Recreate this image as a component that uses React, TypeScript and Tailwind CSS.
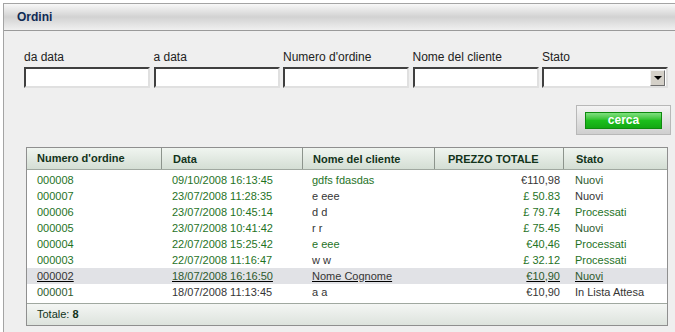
import React from 'react';

const G = 'text-[#1f731f]';
const D = 'text-[#353535]';
const M = 'text-[#2d5a2d]';

type Row = {
  num: string;
  data: string;
  nome: string;
  prezzo: string;
  stato: string;
  c: [string, string, string, string, string];
  hl?: boolean;
};

const rows: Row[] = [
  { num: '000008', data: '09/10/2008 16:13:45', nome: 'gdfs fdasdas', prezzo: '€110,98', stato: 'Nuovi', c: [G, G, G, D, M] },
  { num: '000007', data: '23/07/2008 11:28:35', nome: 'e eee', prezzo: '£ 50.83', stato: 'Nuovi', c: [G, G, D, G, D] },
  { num: '000006', data: '23/07/2008 10:45:14', nome: 'd d', prezzo: '£ 79.74', stato: 'Processati', c: [G, G, D, G, G] },
  { num: '000005', data: '23/07/2008 10:41:42', nome: 'r r', prezzo: '£ 75.45', stato: 'Nuovi', c: [G, G, D, G, M] },
  { num: '000004', data: '22/07/2008 15:25:42', nome: 'e eee', prezzo: '€40,46', stato: 'Processati', c: [G, G, G, G, G] },
  { num: '000003', data: '22/07/2008 11:16:47', nome: 'w w', prezzo: '£ 32.12', stato: 'Processati', c: [G, G, D, G, G] },
  { num: '000002', data: '18/07/2008 16:16:50', nome: 'Nome Cognome', prezzo: '€10,90', stato: 'Nuovi', c: [D, M, D, M, M], hl: true },
  { num: '000001', data: '18/07/2008 11:13:45', nome: 'a a', prezzo: '€10,90', stato: 'In Lista Attesa', c: [M, D, D, D, D] },
];

const fields = ['da data', 'a data', "Numero d'ordine", 'Nome del cliente', 'Stato'];

function Field({ label, select }: { label: string; select?: boolean }) {
  return (
    <div className="flex w-[126px] flex-col">
      <span className="h-[17px] text-[12px] leading-[14px] text-[#222]">{label}</span>
      <div className="flex h-[21px] items-center justify-end border-2 border-t-[#404040] border-l-[#404040] border-r-[#e0e0e0] border-b-[#e0e0e0] bg-white">
        {select && (
          <div className="mr-[1px] flex h-[16px] w-[15px] items-center justify-center border border-t-[#f0f0f0] border-l-[#f0f0f0] border-r-[#707070] border-b-[#707070] bg-[#d4d0c8]">
            <div className="h-0 w-0 border-x-[4px] border-t-[4px] border-x-transparent border-t-black" />
          </div>
        )}
      </div>
    </div>
  );
}

export default function App() {
  return (
    <div className="h-[332px] w-[675px] overflow-hidden bg-white pl-[3px] pt-[3px] font-['Liberation_Sans',Arial,sans-serif]">
      <div className="flex h-full flex-col border-l border-t border-[#a4a4a4] bg-[#efefef]">
        <div className="flex h-[27px] items-center border-b border-[#9a9a9a] bg-gradient-to-b from-[#f8f8f8] via-[#d2d2d2] to-[#f0f0f0] pl-[13px]">
          <span className="text-[12px] font-bold text-[#0f2a55]">Ordini</span>
        </div>

        <div className="flex flex-col pl-[20px] pt-[19px]">
          <div className="flex gap-[3.5px]">
            {fields.map((f, i) => (
              <Field key={f} label={f} select={i === 4} />
            ))}
          </div>

          <div className="mt-[17px] flex justify-end pr-[4px]">
            <div className="flex h-[30px] w-[95px] items-center justify-center border border-[#b8b8b8] bg-gradient-to-b from-[#f4f4f4] to-[#cfcfcf]">
              <div className="flex h-[17px] w-[77px] items-center justify-center border border-[#0e8a0e] bg-gradient-to-b from-[#7fe07f] via-[#1cbf1c] to-[#14a814] text-[12px] font-bold leading-none text-white">
                cerca
              </div>
            </div>
          </div>

          <div className="ml-[2px] mt-[12px] w-[642px] border border-[#8f8f8f] bg-white text-[11px]">
            <div className="flex h-[22px] items-center border-b border-[#a0a8a0] bg-gradient-to-b from-[#f0f5f0] to-[#d4ded4] font-bold text-[#12331a]">
              <div className="w-[134px] pl-[10px]">Numero d'ordine</div>
              <div className="h-full w-[141px] border-l border-[#8c948c] pl-[11px] leading-[22px]">Data</div>
              <div className="h-full w-[132px] border-l border-[#8c948c] pl-[10px] leading-[22px]">Nome del cliente</div>
              <div className="h-full w-[129px] border-l border-[#8c948c] pl-[13px] leading-[22px]">PREZZO TOTALE</div>
              <div className="h-full flex-1 border-l border-[#8c948c] pl-[12px] leading-[22px]">Stato</div>
            </div>
            <div className="pb-[3px] pt-[2px]">
              {rows.map((r) => (
                <div key={r.num} className={`flex h-[16px] items-center ${r.hl ? 'bg-[#e1e2e6] underline' : ''}`}>
                  <div className={`w-[134px] pl-[10px] ${r.c[0]}`}>{r.num}</div>
                  <div className={`w-[141px] pl-[11px] ${r.c[1]}`}>{r.data}</div>
                  <div className={`w-[132px] pl-[10px] ${r.c[2]}`}>{r.nome}</div>
                  <div className={`w-[129px] pr-[3px] text-right ${r.c[3]}`}>{r.prezzo}</div>
                  <div className={`flex-1 pl-[12px] ${r.c[4]}`}>{r.stato}</div>
                </div>
              ))}
            </div>
            <div className="flex h-[22px] items-center border-t border-[#a0a8a0] bg-gradient-to-b from-[#f4f6f4] to-[#dde3dd] pl-[10px] text-[#12331a]">
              Totale: <b className="ml-[3px]">8</b>
            </div>
          </div>
        </div>
      </div>
    </div>
  );
}
